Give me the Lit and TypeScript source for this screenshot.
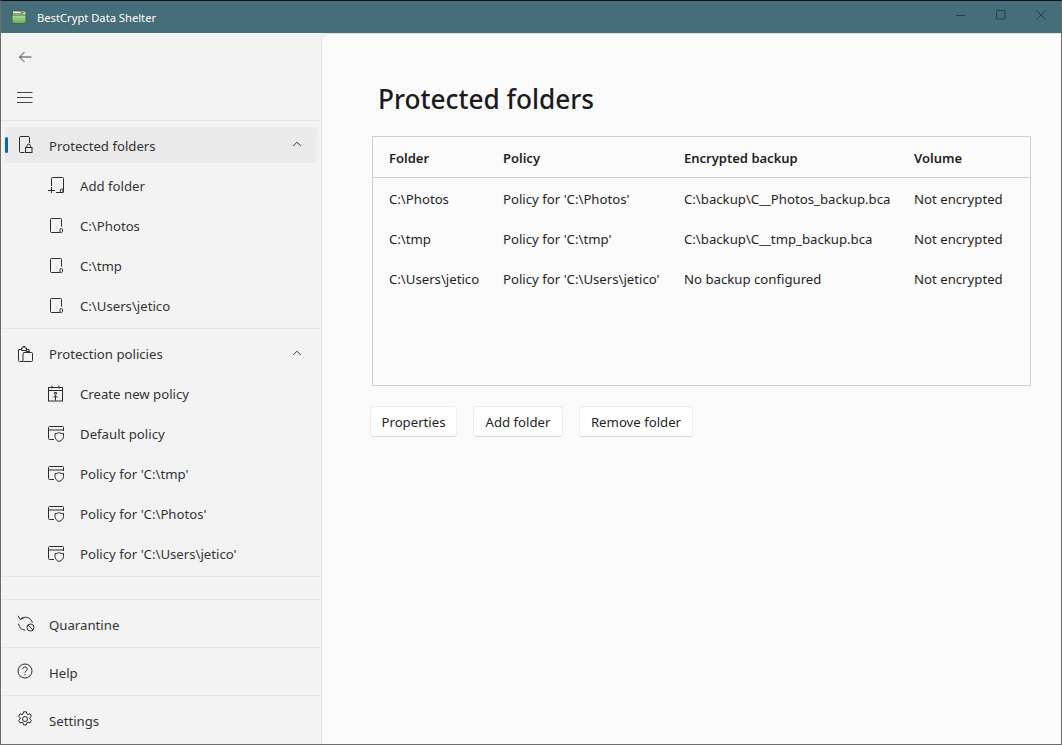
import { LitElement, css, html, svg } from "lit";
import { customElement } from "lit/decorators.js";

const wrap = (w: number, h: number, body: unknown) => html`<svg
  class="ico"
  width=${w}
  height=${h}
  viewBox="0 0 ${w} ${h}"
  fill="none"
  stroke="#2b2b2b"
  stroke-width="1"
>
  ${body}
</svg>`;

const ICONS = {
  back: wrap(16, 16, svg`<path d="M14.500 8H2.500M7.500 3 2.500 8l5 5" stroke="#444"/>`),
  menu: wrap(16, 12, svg`<path d="M0 1.500h15.500M0 6.500h15.500M0 11.500h15.500" stroke="#444"/>`),
  lockDoc: wrap(
    16,
    18,
    svg`<path d="M6.500 16.500H2.500a1 1 0 0 1-1-1V1.500a1 1 0 0 1 1-1h8a1 1 0 0 1 1 1V7"/>
      <rect x="7.500" y="11.500" width="6.500" height="5"/>
      <path d="M9 11.500V9.800a1.700 1.700 0 0 1 3.400 0v1.700"/>`,
  ),
  addDoc: wrap(
    18,
    18,
    svg`<path d="M3.500 10V2.500a1 1 0 0 1 1-1h10a1 1 0 0 1 1 1v13.500a.5.500 0 0 1-.5.500H8"/>
      <path d="M0 14.500h7M3.500 11v6"/>
      <rect x="12.500" y="13" width="2.500" height="3.500" rx="1"/>`,
  ),
  doc: wrap(
    16,
    17,
    svg`<path d="M13.500 9.500V2.500a1 1 0 0 0-1-1H3.500a1 1 0 0 0-1 1v12a1 1 0 0 0 1 1H12"/>
      <rect x="12" y="11.500" width="2.500" height="4" rx="1.200"/>`,
  ),
  clipboard: wrap(
    16,
    17,
    svg`<path d="M5 15.500H1.500a1 1 0 0 1-1-1V3.500H4M9 3.500h2v3"/>
      <path d="M3.500 3.500V2H5V.5h2V2h1.500v2.500h-5z"/>
      <rect x="5" y="6.500" width="9.500" height="9" rx="1"/>
      <path d="M8 6.500v-1h3.500v1"/>`,
  ),
  calendar: wrap(
    16,
    17,
    svg`<rect x=".5" y="2.500" width="14" height="13.500"/>
      <path d="M.5 5.500h14M4 .5v3M11 .5v3"/>
      <path d="M7.500 15.500V10.500M5.300 12.500l2.200-2.200 2.200 2.200M6.500 7.500h2v1.500h-2z"/>`,
  ),
  policy: wrap(
    17,
    16,
    svg`<path d="M6 13.500H1.500a1 1 0 0 1-1-1v-11a1 1 0 0 1 1-1h13a1 1 0 0 1 1 1V5"/>
      <path d="M.5 4h15"/>
      <path d="M7 7.500c2 0 3.300-.4 4-1 .8.600 2.200 1 4.500 1v3c0 2.500-1.800 4-4.500 5-2.500-1-4-2.500-4-5z"/>`,
  ),
  quarantine: wrap(
    18,
    18,
    svg`<path d="M3.500 5.200A7.200 7.200 0 0 1 15.400 8.500M1.600 9.800a7.200 7.200 0 0 0 6.700 6.300"/>
      <path d="M1 1.800 3.300 5.500 7 3.800"/>
      <circle cx="13.500" cy="13.500" r="3.500"/>
      <path d="m11 11 5 5"/>`,
  ),
  help: wrap(
    16,
    16,
    svg`<circle cx="8" cy="8" r="7"/>
      <path d="M5.700 6.200c0-1.300 1-2.200 2.300-2.200s2.300.9 2.300 2.100c0 1-.6 1.500-1.300 2-.7.500-1 .900-1 1.600"/>
      <path d="M8 11v1.300"/>`,
  ),
  gear: wrap(
    16,
    16,
    svg`<circle cx="8" cy="8" r="2.500"/>
      <path d="M6.600.8h2.800l.5 2.100 1.100.6 2-.7 1.400 2.500-1.600 1.400v1.300l1.600 1.400-1.400 2.500-2-.7-1.100.6-.5 2.100H6.600l-.5-2.100-1.100-.6-2 .7L1.600 9.400l1.600-1.400V6.700L1.600 5.300 3 2.800l2 .7 1.100-.6z" stroke-linejoin="round"/>`,
  ),
  chevron: wrap(10, 6, svg`<path d="M1.200 5 5 1.200 8.800 5" stroke="#333"/>`),
};

const LOGO = html`<svg class="logo" width="16" height="16" viewBox="0 0 16 16">
  <defs>
    <linearGradient id="lg" x1="0" y1="0" x2="0" y2="1">
      <stop offset="0" stop-color="#b4d69a" />
      <stop offset="1" stop-color="#6cae5c" />
    </linearGradient>
  </defs>
  <rect x="0.500" y="1" width="15" height="14" rx="3" fill="#3f6b4a" />
  <path d="M1.500 6.500h13V12.500a1.500 1.500 0 0 1-1.500 1.500H3a1.500 1.500 0 0 1-1.500-1.500z" fill="url(#lg)" />
  <path d="M2 2.500h8v1.500H2z" fill="#f4f7ee" />
  <path d="M2 4.500h10l1-1.500h1.500v2.500H2z" fill="#cfe3b9" />
  <path d="M10.500 2h3v1.200h-3z" fill="#d9a1a1" />
</svg>`;

const ROWS = [
  ["C:\\Photos", "Policy for 'C:\\Photos'", "C:\\backup\\C__Photos_backup.bca", "Not encrypted"],
  ["C:\\tmp", "Policy for 'C:\\tmp'", "C:\\backup\\C__tmp_backup.bca", "Not encrypted"],
  ["C:\\Users\\jetico", "Policy for 'C:\\Users\\jetico'", "No backup configured", "Not encrypted"],
];

@customElement("app-root")
export class AppRoot extends LitElement {
  static styles = css`
    :host {
      display: flex;
      flex-direction: column;
      width: 1062px;
      height: 745px;
      box-sizing: border-box;
      overflow: hidden;
      border: 1px solid #6d6d6d;
      border-top-color: #111;
      font-family: "Noto Sans", sans-serif;
      font-size: 13.2px;
      color: #1f1f1f;
      background: #f3f3f3;
    }
    .ico {
      display: block;
      flex: none;
    }
    .titlebar {
      flex: none;
      height: 32px;
      display: flex;
      align-items: center;
      background: #456d7a;
      color: #fff;
      font-size: 11.2px;
      padding-left: 10px;
    }
    .logo {
      margin: -1px 10px 0 0;
    }
    .title {
      flex: 1;
    }
    .win {
      display: flex;
      align-items: center;
      gap: 30px;
      padding-right: 15px;
      margin-top: -5px;
    }
    .body {
      flex: 1;
      min-height: 0;
      display: flex;
    }
    .side {
      width: 320px;
      flex: none;
      display: flex;
      flex-direction: column;
      color: #333;
    }
    .tool {
      height: 40px;
      display: flex;
      align-items: center;
      padding-left: 16px;
    }
    .tool.first {
      margin-top: 4px;
    }
    .tool.menu {
      height: 43px;
      padding-bottom: 3px;
      box-sizing: border-box;
    }
    hr {
      flex: none;
      border: 0;
      height: 1px;
      margin: 0;
      background: #e5e5e5;
    }
    .group {
      padding: 6px 0 2px;
    }
    .group.second {
      padding-top: 7px;
    }
    .item {
      position: relative;
      height: 36px;
      margin: 0 4px;
      display: flex;
      align-items: center;
      border-radius: 5px;
      padding-left: 13px;
      color: #333;
    }
    .item.sel {
      background: #eaeaea;
      margin-bottom: 3px;
    }
    .item.sel .label {
      padding-top: 2px;
    }
    .group.second .item {
      margin-bottom: 2px;
    }
    .item.sel::before {
      content: "";
      position: absolute;
      left: 0;
      top: 10px;
      width: 3px;
      height: 16px;
      border-radius: 2px;
      background: #0f62ad;
    }
    .slot {
      width: 31px;
      flex: none;
    }
    .label {
      flex: 1;
    }
    .chev {
      margin-right: 15px;
      margin-top: -2px;
    }
    .sub {
      height: 40px;
      margin-left: 4px;
      display: flex;
      align-items: center;
      padding-left: 43px;
    }
    .sub .slot {
      width: 32px;
      margin-top: -2px;
    }
    .sub .slot.pol {
      margin-top: 0;
    }
    .spacer {
      height: 22px;
      flex: none;
    }
    .foot {
      height: 47px;
      display: flex;
      align-items: center;
      padding-left: 16px;
      box-sizing: border-box;
    }
    .foot .slot {
      width: 32px;
      margin-top: -1px;
    }
    .foot .label {
      padding-top: 2px;
    }
    .main {
      flex: 1;
      min-width: 0;
      background: #fbfbfb;
      border-top-left-radius: 7px;
      border-left: 1px solid #e5e5e5;
      border-top: 1px solid #e5e5e5;
      padding: 0 30px 0 50px;
    }
    h1 {
      margin: 46px 0 0 6px;
      font-size: 26.2px;
      line-height: 38px;
      font-weight: 500;
      color: #1b1b1b;
    }
    .table {
      height: 250px;
      box-sizing: border-box;
      margin-top: 18px;
      border: 1px solid #d0d0d0;
    }
    .row {
      display: grid;
      grid-template-columns: 114px 181px 230px 1fr;
      height: 40px;
      align-items: center;
      padding-left: 16px;
    }
    .row.head {
      height: 41px;
      box-sizing: border-box;
      border-bottom: 1px solid #d0d0d0;
      font-size: 13px;
      font-weight: 600;
      color: #1f1f1f;
      padding-top: 2px;
    }
    .row.first {
      margin-top: 1px;
    }
    .actions {
      display: flex;
      gap: 16px;
      margin: 20px 0 0 -2px;
    }
    button {
      height: 31px;
      padding: 0;
      font: inherit;
      color: #1f1f1f;
      background: #fff;
      border: 1px solid #ececec;
      border-bottom-color: #d8d8d8;
      border-radius: 4px;
    }
    .w87 {
      width: 87px;
    }
    .w90 {
      width: 90px;
    }
    .w114 {
      width: 114px;
    }
  `;

  private sub(icon: unknown, label: string, slot = "") {
    return html`<div class="sub"><span class="slot ${slot}">${icon}</span><span class="label">${label}</span></div>`;
  }

  private foot(icon: unknown, label: string) {
    return html`<div class="foot"><span class="slot">${icon}</span><span class="label">${label}</span></div>`;
  }

  render() {
    return html`
      <div class="titlebar">
        ${LOGO}
        <span class="title">BestCrypt Data Shelter</span>
        <div class="win">
          ${wrap(10, 10, svg`<path d="M0 5.500h9.500" stroke="#263f49"/>`)}
          ${wrap(10, 10, svg`<rect x=".5" y=".5" width="8.500" height="8.500" rx="1" stroke="#263f49"/>`)}
          ${wrap(10, 10, svg`<path d="m.5.5 9 9M9.500.5l-9 9" stroke="#263f49"/>`)}
        </div>
      </div>
      <div class="body">
        <nav class="side">
          <div class="tool first">${ICONS.back}</div>
          <div class="tool menu">${ICONS.menu}</div>
          <hr />
          <div class="group">
            <div class="item sel">
              <span class="slot">${ICONS.lockDoc}</span>
              <span class="label">Protected folders</span>
              <span class="chev">${ICONS.chevron}</span>
            </div>
            ${this.sub(ICONS.addDoc, "Add folder")}
            ${this.sub(ICONS.doc, "C:\\Photos")}
            ${this.sub(ICONS.doc, "C:\\tmp")}
            ${this.sub(ICONS.doc, "C:\\Users\\jetico")}
          </div>
          <hr />
          <div class="group second">
            <div class="item">
              <span class="slot">${ICONS.clipboard}</span>
              <span class="label">Protection policies</span>
              <span class="chev">${ICONS.chevron}</span>
            </div>
            ${this.sub(ICONS.calendar, "Create new policy")}
            ${this.sub(ICONS.policy, "Default policy", "pol")}
            ${this.sub(ICONS.policy, "Policy for 'C:\\tmp'", "pol")}
            ${this.sub(ICONS.policy, "Policy for 'C:\\Photos'", "pol")}
            ${this.sub(ICONS.policy, "Policy for 'C:\\Users\\jetico'", "pol")}
          </div>
          <hr />
          <div class="spacer"></div>
          <hr />
          ${this.foot(ICONS.quarantine, "Quarantine")}
          <hr />
          ${this.foot(ICONS.help, "Help")}
          <hr />
          ${this.foot(ICONS.gear, "Settings")}
        </nav>
        <main class="main">
          <h1>Protected folders</h1>
          <div class="table">
            <div class="row head">
              <span>Folder</span><span>Policy</span><span>Encrypted backup</span><span>Volume</span>
            </div>
            ${ROWS.map(
              (r, i) =>
                html`<div class="row ${i === 0 ? "first" : ""}">${r.map((c) => html`<span>${c}</span>`)}</div>`,
            )}
          </div>
          <div class="actions">
            <button class="w87">Properties</button>
            <button class="w90">Add folder</button>
            <button class="w114">Remove folder</button>
          </div>
        </main>
      </div>
    `;
  }
}
